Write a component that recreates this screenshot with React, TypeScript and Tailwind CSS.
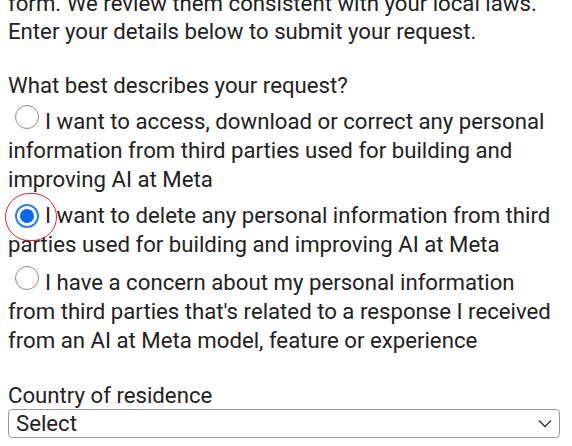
import React from 'react';

type Option = { id: string; label: string };

const options: Option[] = [
    { id: 'access', label: 'I want to access, download or correct any personal information from third parties used for building and improving AI at Meta' },
    { id: 'delete', label: 'I want to delete any personal information from third parties used for building and improving AI at Meta' },
    { id: 'concern', label: "I have a concern about my personal information from third parties that's related to a response I received from an AI at Meta model, feature or experience" },
];

function Radio({ checked }: { checked: boolean }) {
    return (
        <span className="relative mr-[6px] ml-[7px] inline-block h-[24px] w-[24px] align-baseline">
            {checked ? (
                <span className="flex h-[24px] w-[24px] items-center justify-center rounded-full border-2 border-[#2f7fe6]">
                    <span className="h-[14px] w-[14px] rounded-full bg-[#0b66f0]" />
                </span>
            ) : (
                <span className="block h-[24px] w-[24px] rounded-full border-[1.5px] border-[#8c8c8c] bg-white" />
            )}
            {checked && (
                <span className="pointer-events-none absolute top-[-11px] left-[-10px] h-[48px] w-[52px] rounded-full border-[1.5px] border-[#e0282e]" />
            )}
        </span>
    );
}

export default function App() {
    const selected = 'delete';

    return (
        <div className="h-[446px] w-[572px] overflow-hidden bg-white font-['Roboto',sans-serif] text-[22.2px] leading-[28px] text-[#222]">
            <div className="mt-[-11px] px-2">
                <p>
                    form. We review them consistent with your local laws.
                    <br />
                    Enter your details below to submit your request.
                </p>
                <p className="mt-[26px]">What best describes your request?</p>
                <div className="mt-[-1.5px] flex flex-col pr-[6px] leading-[29px]">
                    {options.map((o) => (
                        <div key={o.id} className="pt-[7px]">
                            <Radio checked={o.id === selected} />
                            {o.label}
                        </div>
                    ))}
                </div>
                <p className="mt-[26px]">Country of residence</p>
                <div className="mr-[4px] flex h-[29px] items-center justify-between rounded-[4px] border border-[#9a9a9a] pr-[7px] pl-[7px] leading-none">
                    <span>Select</span>
                    <svg width="14" height="9" viewBox="0 0 14 9" fill="none" stroke="#333" strokeWidth="1.4">
                        <path d="M1 1.5 7 7.5l6-6" />
                    </svg>
                </div>
            </div>
        </div>
    );
}
